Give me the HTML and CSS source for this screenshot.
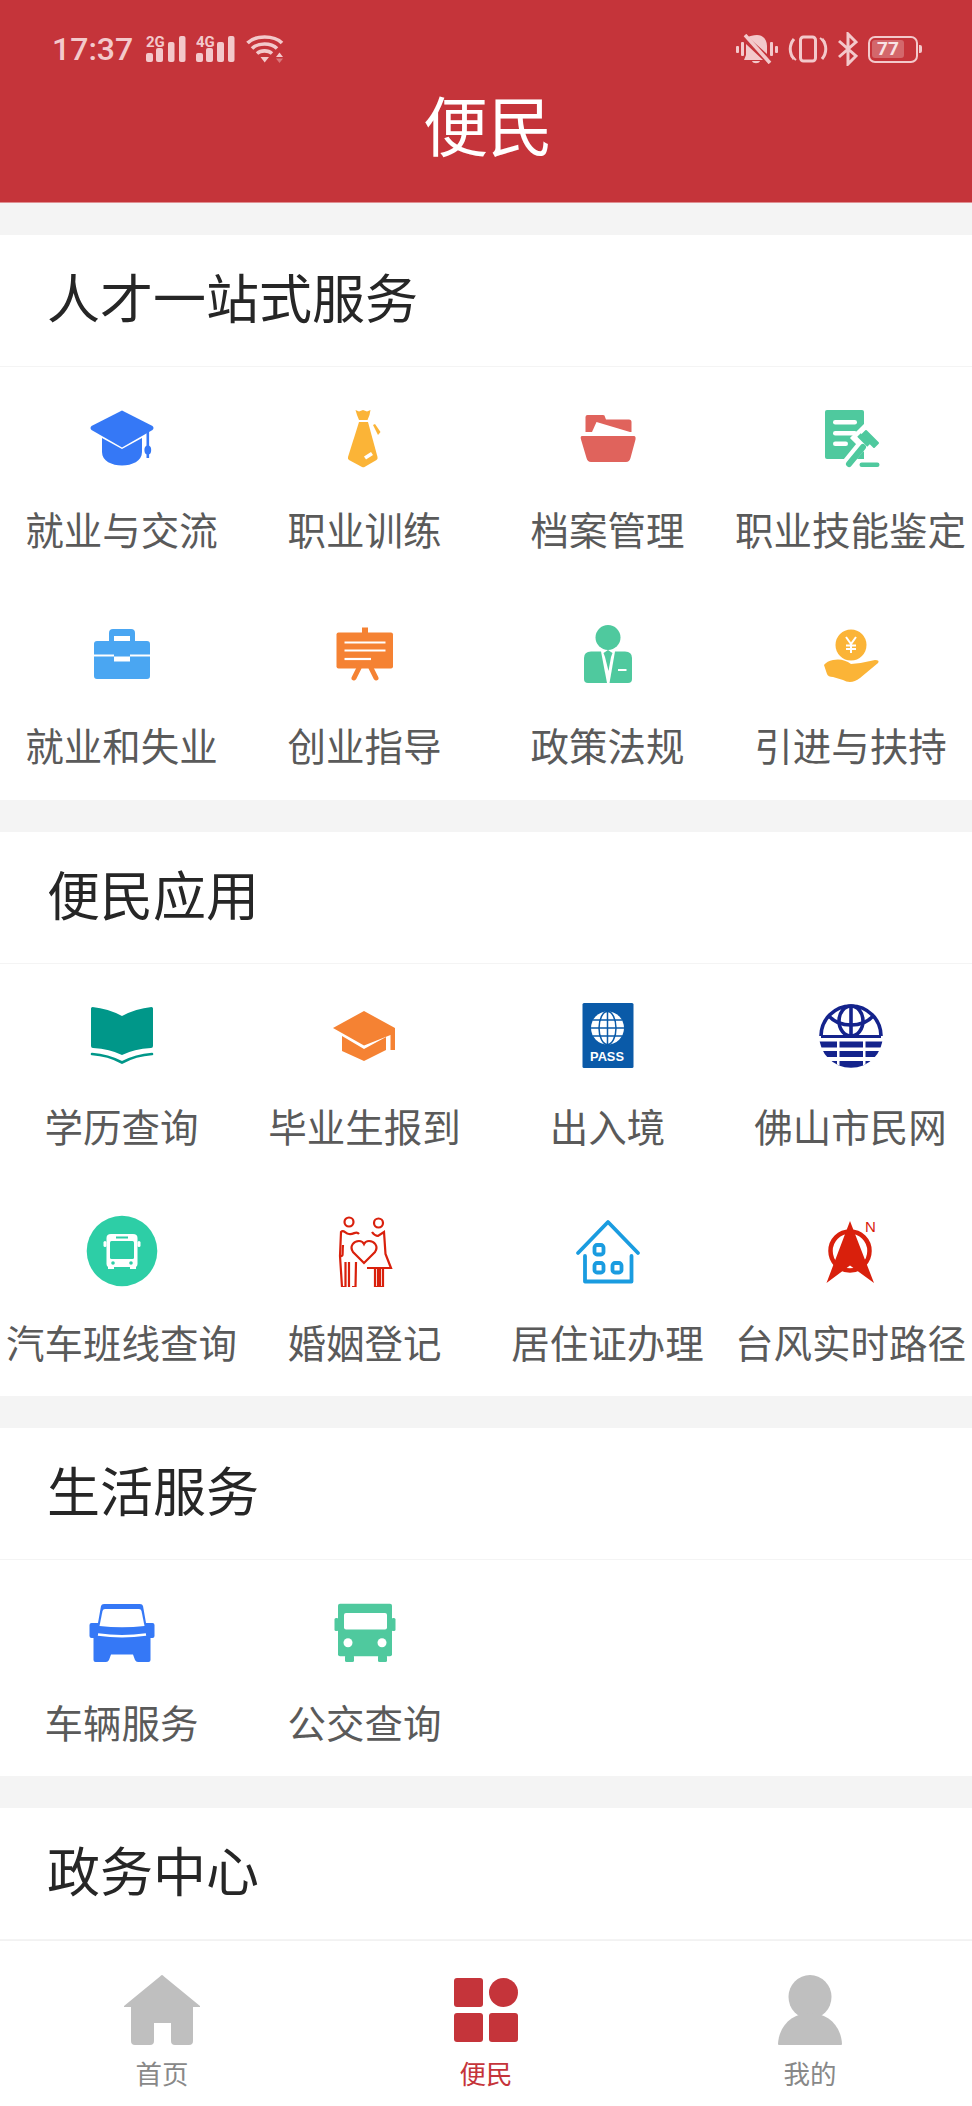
FILE: index.html
```html
<!DOCTYPE html>
<html lang="zh-CN">
<head>
    <meta charset="UTF-8">
    <meta name="viewport" content="width=device-width, initial-scale=1.0">
    <title>便民</title>
    <link rel="stylesheet" href="styles.css">
</head>
<body>
    <header class="app-header">
        <div class="status-bar">
            <div class="status-group">
                <span class="status-time">17:37</span>
                <svg class="status-icon" width="40" height="34" viewBox="0 -4 40 34"><text x="0" y="11" class="net-type">2G</text><rect x="0" y="17" width="7" height="9" rx="2"/><rect x="10" y="12" width="7" height="14" rx="2"/><rect x="22" y="6" width="6.500" height="20" rx="2"/><rect x="33" y="0" width="6.500" height="26" rx="2"/></svg>
                <svg class="status-icon" width="40" height="34" viewBox="0 -4 40 34"><text x="0" y="11" class="net-type">4G</text><rect x="0" y="17" width="7" height="9" rx="2"/><rect x="10" y="12" width="7" height="14" rx="2"/><rect x="21" y="6" width="7" height="20" rx="2"/><rect x="32" y="0" width="6.500" height="26" rx="2"/></svg>
                <svg class="status-icon" width="38" height="28" viewBox="0 0 38 28"><g fill="none" stroke="#f3c9cb" stroke-width="3.600"><path d="M1.500 8 C9 0 28 0 36 8"/><path d="M6 13.500 C12 7.500 25 7.500 31 13.500"/><path d="M11 18.500 C15 15 22 15 26 18.500"/></g><path d="M14.500 22 H23 L18.700 27.500Z"/><path d="M30 22 L33.500 17.500 L37 22Z"/><path d="M30 23.500 L33.500 28 L37 23.500Z" opacity=".45"/></svg>
            </div>
            <div class="status-group status-right">
                <svg class="status-icon" width="42" height="30" viewBox="0 0 42 30"><rect x="0" y="12" width="3" height="7" rx="1"/><rect x="5" y="8" width="3" height="14" rx="1"/><rect x="34" y="8" width="3" height="14" rx="1"/><rect x="39" y="12" width="3" height="7" rx="1"/><path d="M21 1 C28 1 31 7 31 12 V20 L12 3 C14 2 17 1 21 1Z"/><path d="M10 10 L27 26 H8 L10 21Z"/><path d="M16 27 H24 C23 30 17 30 16 27Z"/><path d="M9 1 L34 29" stroke="#f3c9cb" stroke-width="3.600"/></svg>
                <svg class="status-icon status-line" width="40" height="28" viewBox="0 0 40 28" stroke="#f3c9cb" stroke-width="3"><rect x="12.500" y="2" width="15" height="24" rx="3"/><path d="M6 4 C1 10 1 18 6 24"/><path d="M34 4 C39 10 39 18 34 24"/><path d="M3 21 L8 25" stroke-width="2"/><path d="M37 7 L32 3" stroke-width="2"/></svg>
                <svg class="status-icon status-line" width="20" height="34" viewBox="0 0 20 34" stroke="#f3c9cb" stroke-width="3"><path d="M1 9 L18 24 L10 32 V2 L18 10 L1 25"/></svg>
                <div class="battery"><span class="battery-level">77</span></div>
            </div>
        </div>
        <h1 class="page-title">便民</h1>
    </header>

    <main class="content">
        <section class="panel">
            <h2 class="panel-title">人才一站式服务</h2>
            <div class="service-grid">
                <a class="service">
                    <svg class="service-icon" viewBox="0 0 72 72" fill="#3578f6"><path d="M36 8.500 L66.500 24 Q68.500 26 66.500 28 L36 45.500 L5.500 28 Q3.500 26 5.500 24Z"/><path d="M16 36 L36 47 L56 36 V50 C56 59 46 63.500 36 63.500 C26 63.500 16 59 16 50Z"/><rect x="60.500" y="29" width="2.600" height="27"/><ellipse cx="61.800" cy="48" rx="3.400" ry="4.600"/></svg>
                    <span class="service-name">就业与交流</span>
                </a>
                <a class="service">
                    <svg class="service-icon" viewBox="0 0 72 72" fill="#fbb437"><path d="M26.500 8 L30 9.500 L34 8 L38 9.500 L41.500 8 L40.500 13 L38.500 18 H30 L28 13Z"/><path d="M30 20 H39 L48.500 55 Q49 57 47.500 58 L35.500 65 Q34.500 65.500 33 65 L20 58 Q18.500 57 19 55Z"/><path d="M44 23 L46 22 L51.500 30 L49 33Z"/><path d="M35 54.500 L42 50 L44 53 L37 57.500Z" fill="#fff"/></svg>
                    <span class="service-name">职业训练</span>
                </a>
                <a class="service">
                    <svg class="service-icon" viewBox="0 0 72 72" fill="#e0635c"><path d="M13.500 15 Q13.500 13 15.500 13 H31 Q33 13 33 15 L34 17.500 H57 Q59.500 17.500 59.500 20 V30 H13.500Z"/><path d="M20 30 L24.500 20 L58 30Z" fill="#fff"/><path d="M10 34 H62 Q64 34 63.500 37.500 L58.500 56 Q57.500 60 54 60 H19 Q15.500 60 14.500 56 L9 37.500 Q8 34 10 34Z"/></svg>
                    <span class="service-name">档案管理</span>
                </a>
                <a class="service">
                    <svg class="service-icon" viewBox="0 0 72 72" fill="#4fc99e"><path d="M12 8 H47 Q49 8 49 10 V57 H12 Q10 57 10 55 V10 Q10 8 12 8Z"/><g fill="#fff"><rect x="18" y="18" width="24" height="4.500" rx="2.200"/><rect x="18" y="29" width="24" height="4.500" rx="2.200"/><rect x="18" y="39.500" width="15" height="4.500" rx="2.200"/></g><path d="M50 28 L66 44 L58 52 L42 36Z M46 44 L33 60" fill="#fff" stroke="#fff" stroke-width="10" stroke-linecap="round"/><path d="M50 60 H70 V72 H50Z" fill="#fff"/><path d="M47 33 L51 29 L63 41 L59 45Z" stroke="#4fc99e" stroke-width="2" stroke-linejoin="round"/><path d="M49 38 L44 33 L54 43Z" stroke="#4fc99e" stroke-width="5"/><path d="M48 45 L34 62" stroke="#4fc99e" stroke-width="6" stroke-linecap="round"/><rect x="44.500" y="60.500" width="20" height="4.500" rx="2.200"/></svg>
                    <span class="service-name">职业技能鉴定</span>
                </a>
                <a class="service">
                    <svg class="service-icon" viewBox="0 0 72 72" fill="#4aa6f2"><path d="M23 23 V15 Q23 11 27 11 H45 Q49 11 49 15 V23 H44 V18 H28 V23Z"/><path d="M11 23 H61 Q64 23 64 26 V36.500 H44 V38.500 H28 V36.500 H8 V26 Q8 23 11 23Z"/><path d="M8 38.500 H28 V43.500 H44 V38.500 H64 V58 Q64 61 61 61 H11 Q8 61 8 58Z"/></svg>
                    <span class="service-name">就业和失业</span>
                </a>
                <a class="service">
                    <svg class="service-icon" viewBox="0 0 72 72" fill="#f58233"><rect x="33" y="9.500" width="6" height="6"/><rect x="7.500" y="14.500" width="56.500" height="36" rx="2"/><g stroke="#fff" stroke-width="2.200"><path d="M15.500 24.500 H56.500"/><path d="M15.500 32.500 H56.500"/><path d="M15.500 41 H42"/></g><path d="M30 50 L25 60" stroke="#f58233" stroke-width="5" stroke-linecap="round"/><path d="M42 50 L47 60" stroke="#f58233" stroke-width="5" stroke-linecap="round"/></svg>
                    <span class="service-name">创业指导</span>
                </a>
                <a class="service">
                    <svg class="service-icon" viewBox="0 0 72 72" fill="#4fc99e"><circle cx="36" cy="19.500" r="12.500"/><path d="M19 33.500 H29 L35 65 H16 Q12 65 12 61 V40 Q12 33.500 19 33.500Z"/><path d="M53 33.500 H43 L37.500 65 H56 Q60 65 60 61 V40 Q60 33.500 53 33.500Z"/><path d="M31.500 35 L36 32 L40.500 35 L39 39 L36.500 53 L33 39Z"/><rect x="46" y="51" width="8.500" height="2" fill="#fff"/></svg>
                    <span class="service-name">政策法规</span>
                </a>
                <a class="service">
                    <svg class="service-icon" viewBox="0 0 72 72" fill="#fbb437"><circle cx="36" cy="27" r="15.500"/><path d="M31 19 L36 26 L41 19 M36 26 V35 M31 27.500 H41 M31 31 H41" fill="none" stroke="#fff" stroke-width="2"/><path d="M9 47 Q12 43 18 42 Q28 40 36 46 Q48 45 60 42 Q65 42 63 45 L45 60 Q36 67 28 62 L18 59 Q13 59 12 56Z"/></svg>
                    <span class="service-name">引进与扶持</span>
                </a>
            </div>
        </section>

        <section class="panel">
            <h2 class="panel-title">便民应用</h2>
            <div class="service-grid">
                <a class="service">
                    <svg class="service-icon" viewBox="0 0 72 72" fill="#009789"><path d="M5 9.500 Q5 8 6.500 8 Q22 9.500 36 17 Q50 9.500 65.500 8 Q67 8 67 9.500 V47 Q67 49 65 49 Q48 50 36 56 Q24 50 7 49 Q5 49 5 47Z"/><path d="M6 55 Q22 56 36 63.500 Q50 56 66 55" fill="none" stroke="#009789" stroke-width="2.600" stroke-linecap="round"/></svg>
                    <span class="service-name">学历查询</span>
                </a>
                <a class="service">
                    <svg class="service-icon" viewBox="0 0 72 72" fill="#f58233"><path d="M35 12 L66 29 V51 H61.500 V36 L35 46.500 L4 29Z"/><path d="M13 37 L35 50 L57 38 V51 L35 62 L13 52Z"/></svg>
                    <span class="service-name">毕业生报到</span>
                </a>
                <a class="service">
                    <svg class="service-icon" viewBox="0 0 72 72"><rect x="10.500" y="4" width="51" height="65" rx="1.500" fill="#0a5aa8"/><circle cx="35.500" cy="29" r="16.500" fill="#fff"/><g fill="none" stroke="#0a5aa8" stroke-width="1.500"><ellipse cx="35.500" cy="29" rx="8.500" ry="16.500"/><path d="M35.500 12.500 V45.500 M19 29 H52 M21 21 H50 M21 37 H50"/></g><text x="35" y="61.500" class="pass-text">PASS</text></svg>
                    <span class="service-name">出入境</span>
                </a>
                <a class="service">
                    <svg class="service-icon" viewBox="0 0 72 72"><g fill="none" stroke="#14238c" stroke-width="3.600"><path d="M6 37 A30 30 0 0 1 66 37"/><path d="M6 37.500 H66" stroke-width="3"/><path d="M36 6 V36"/><ellipse cx="36" cy="22" rx="12" ry="15"/><path d="M14 17 C20 24 28 26 36 26 C44 26 52 24 58 17"/></g><clipPath id="globe-lower"><circle cx="36" cy="37" r="31.800"/></clipPath><g clip-path="url(#globe-lower)" fill="#14238c"><rect x="0" y="42.500" width="72" height="6"/><rect x="0" y="52" width="72" height="6"/><rect x="0" y="62" width="72" height="7"/><rect x="22" y="41" width="2.500" height="29" fill="#fff"/><rect x="48" y="41" width="2.500" height="29" fill="#fff"/></g></svg>
                    <span class="service-name">佛山市民网</span>
                </a>
                <a class="service">
                    <svg class="service-icon" viewBox="0 0 72 72"><circle cx="36" cy="36" r="35.300" fill="#2dcea6"/><path d="M25 19 H47 Q51.500 19 51.500 23 V49 Q51.500 51 50 52 V54 H44 V52 H28 V54 H22 V52 Q20.500 51 20.500 49 V23 Q20.500 19 25 19Z" fill="#fff"/><rect x="24" y="26" width="24" height="18" rx="1.500" fill="#2dcea6"/><rect x="30" y="21.500" width="12" height="2" fill="#2dcea6"/><circle cx="27" cy="48" r="1.800" fill="#2dcea6"/><circle cx="45" cy="48" r="1.800" fill="#2dcea6"/><rect x="17.500" y="26" width="3" height="6" rx="1.500" fill="#fff"/><rect x="51.500" y="26" width="3" height="6" rx="1.500" fill="#fff"/></svg>
                    <span class="service-name">汽车班线查询</span>
                </a>
                <a class="service">
                    <svg class="service-icon" viewBox="0 0 72 72" fill="none" stroke="#d9200c" stroke-width="2.200"><circle cx="20" cy="7" r="4.500"/><circle cx="49.500" cy="8" r="4.500"/><path d="M30 19 C27 15 25 20 20 19 C16 19 15 14 12 17 L11 41 L13 72 H16.500 V47"/><path d="M20 47 V72 M23 72 H26.500 L27 47"/><path d="M11 41 C15 42 13 39 14 30"/><path d="M43 17 C45 20 47 21 49 21 L55 17 L56.500 39 L62 53 H38 M46 54 V72 H49 V54 M51 54 V72 H54 V54"/><path d="M35 48 L24 37 C20 31 25 26 30 26 C32 26 34 27 35 29 C36 27 38 26 40 26 C45 26 50 31 46 37Z"/></svg>
                    <span class="service-name">婚姻登记</span>
                </a>
                <a class="service">
                    <svg class="service-icon" viewBox="0 0 72 72" fill="none" stroke="#1a9ce0" stroke-width="3.800" stroke-linecap="round" stroke-linejoin="round"><path d="M6 38 L36 7 L66 38"/><path d="M13 41 V66.500 H59.500 V41"/><rect x="22.500" y="30" width="9" height="9.500" rx="2.500"/><rect x="22.500" y="48" width="9" height="9.500" rx="2.500"/><rect x="40.500" y="48" width="9" height="9.500" rx="2.500"/></svg>
                    <span class="service-name">居住证办理</span>
                </a>
                <a class="service">
                    <svg class="service-icon" viewBox="0 0 72 72" fill="#d9200c"><circle cx="35" cy="36" r="19.500" fill="none" stroke="#d9200c" stroke-width="4.500"/><path d="M35 6 L59 68 L35 50.500 L11.500 68Z"/><text x="50" y="17" class="compass-n">N</text></svg>
                    <span class="service-name">台风实时路径</span>
                </a>
            </div>
        </section>

        <section class="panel">
            <h2 class="panel-title">生活服务</h2>
            <div class="service-grid">
                <a class="service">
                    <svg class="service-icon" viewBox="0 0 72 72" fill="#3578f6"><path d="M15 11 Q15.500 9 18 9 H54 Q56.500 9 57 11 L60 28 H66.500 Q68.500 28 68.500 30 V41 Q68.500 43 66.500 43 H64.500 V65 Q64.500 67 62.500 67 H52 Q50 67 49 65 L47 59.500 H25 L23 65 Q22 67 20 67 H9.500 Q7.500 67 7.500 65 V43 H5.500 Q3.500 43 3.500 41 V30 Q3.500 28 5.500 28 H12Z"/><path d="M19 14 H53 Q55 14 55.500 16 L58.500 31 Q36 33.500 13.500 31 L16.500 16 Q17 14 19 14Z" fill="#fff"/><path d="M12 39.500 Q36 43 60 39.500" fill="none" stroke="#fff" stroke-width="2.600"/></svg>
                    <span class="service-name">车辆服务</span>
                </a>
                <a class="service">
                    <svg class="service-icon" viewBox="0 0 72 72" fill="#4fc99e"><rect x="9" y="8.700" width="54" height="52.500" rx="2"/><rect x="5.500" y="23" width="4" height="13" rx="1.500"/><rect x="62.500" y="23" width="4" height="13" rx="1.500"/><rect x="16" y="60" width="9" height="7" rx="1.500"/><rect x="49" y="60" width="9" height="7" rx="1.500"/><rect x="15" y="18" width="43" height="16.500" rx="2" fill="#fff"/><circle cx="19" cy="47.700" r="4.500" fill="#fff"/><circle cx="53" cy="47.700" r="4.500" fill="#fff"/></svg>
                    <span class="service-name">公交查询</span>
                </a>
            </div>
        </section>

        <section class="panel">
            <h2 class="panel-title">政务中心</h2>
        </section>
    </main>

    <nav class="tab-bar">
        <a class="tab">
            <svg class="tab-icon" viewBox="0 0 76 72" fill="#bfbfbf"><path d="M38 0 Q39 0 40 1.500 L76 31 V32 H69 V66 Q69 70 65 70 H51 Q47 70 47 66 V48 H30 V66 Q30 70 26 70 H11 Q7 70 7 66 V32 H0 V31 L36 1.500 Q37 0 38 0Z"/></svg>
            <span class="tab-label">首页</span>
        </a>
        <a class="tab tab-active">
            <svg class="tab-icon" viewBox="0 0 76 72" fill="#c5343a"><rect x="6" y="3" width="29" height="29" rx="3"/><circle cx="55.500" cy="17.500" r="14.500"/><rect x="6" y="38" width="29" height="29" rx="3"/><rect x="41" y="38" width="29" height="29" rx="3"/></svg>
            <span class="tab-label">便民</span>
        </a>
        <a class="tab">
            <svg class="tab-icon" viewBox="0 0 76 72" fill="#bfbfbf"><ellipse cx="38" cy="22" rx="21.500" ry="22"/><path d="M38 38 C55 38 69 50 70 69 Q70 70 69 70 H7 Q6 70 6 69 C7 50 21 38 38 38Z"/></svg>
            <span class="tab-label">我的</span>
        </a>
    </nav>
</body>
</html>
```

FILE: styles.css
```css
* {
    margin: 0;
    padding: 0;
    box-sizing: border-box;
}
body {
    width: 972px;
    height: 2106px;
    display: flex;
    flex-direction: column;
    overflow: hidden;
    background: #f4f4f4;
    font-family: "Noto Sans CJK SC", "Noto Sans", sans-serif;
}
.app-header {
    height: 203px;
    background: #c5343a;
    border-bottom: 1px solid #e08f92;
    flex-shrink: 0;
}
.status-bar {
    height: 93px;
    padding: 33px 54px 0 52px;
    display: flex;
    justify-content: space-between;
    align-items: flex-start;
}
.status-group {
    display: flex;
    align-items: center;
    gap: 10px;
    height: 32px;
}
.status-time {
    font-family: Roboto, sans-serif;
    font-size: 32px;
    font-weight: 500;
    color: #f3c9cb;
    margin-right: 3px;
}
.status-icon {
    fill: #f3c9cb;
    display: block;
}
.status-line {
    fill: none;
}
.net-type {
    font-family: Roboto, sans-serif;
    font-size: 15px;
    font-weight: 700;
    fill: #f3c9cb;
}
.battery {
    width: 50px;
    height: 27px;
    border: 2.5px solid #f3c9cb;
    border-radius: 7px;
    padding: 2px;
    position: relative;
}
.battery::after {
    content: '';
    position: absolute;
    right: -6px;
    top: 7px;
    width: 3px;
    height: 8px;
    background: #f3c9cb;
    border-radius: 0 2px 2px 0;
}
.battery-level {
    display: block;
    width: 32px;
    height: 18px;
    background: rgba(255, 255, 255, 0.25);
    border-radius: 3px;
    font-family: Roboto, sans-serif;
    font-size: 19px;
    font-weight: 700;
    line-height: 18px;
    text-align: center;
    color: #f8e3e4;
}
.page-title {
    padding-left: 4px;
    font-size: 65px;
    font-weight: 400;
    line-height: 60px;
    color: #fff;
    text-align: center;
}
.content {
    flex: 1;
    min-height: 0;
    overflow: hidden;
    padding-top: 32px;
    display: flex;
    flex-direction: column;
    gap: 32px;
}
.panel {
    background: #fff;
    flex-shrink: 0;
}
.panel-title {
    height: 132px;
    padding-left: 47px;
    border-bottom: 1px solid #f4f4f4;
    font-size: 53px;
    font-weight: 400;
    line-height: 123px;
    color: #262626;
}
.service-grid {
    display: grid;
    grid-template-columns: repeat(4, 1fr);
}
.service {
    height: 216.25px;
    padding-top: 35px;
    display: flex;
    flex-direction: column;
    align-items: center;
}
.service-icon {
    width: 72px;
    height: 72px;
    display: block;
}
.service-name {
    margin-top: 27px;
    font-size: 38.5px;
    line-height: 54px;
    color: #5a5a5a;
    white-space: nowrap;
}
.pass-text {
    font-family: "Liberation Sans", sans-serif;
    font-size: 12.8px;
    font-weight: 700;
    fill: #fff;
    text-anchor: middle;
}
.compass-n {
    font-family: "Liberation Sans", sans-serif;
    font-size: 15px;
    fill: #d9200c;
}
.tab-bar {
    height: 166px;
    flex-shrink: 0;
    display: grid;
    grid-template-columns: repeat(3, 1fr);
    background: #fff;
    border-top: 1px solid #f2f2f2;
    padding-top: 34px;
}
.tab {
    display: flex;
    flex-direction: column;
    align-items: center;
}
.tab-icon {
    width: 76px;
    height: 72px;
    display: block;
}
.tab-label {
    margin-top: 12px;
    font-size: 26.5px;
    line-height: 28px;
    color: #888;
}
.tab-active .tab-label {
    color: #c5343a;
}
```
